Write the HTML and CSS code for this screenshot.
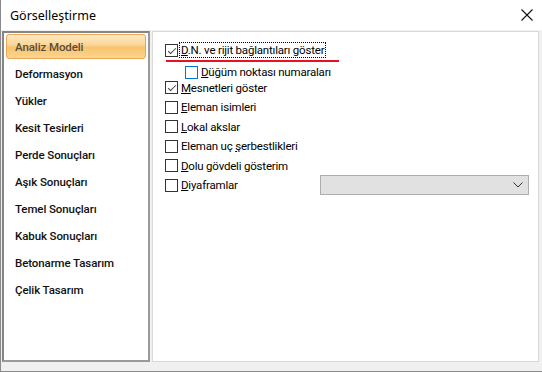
FILE: index.html
```html
<!DOCTYPE html>
<html lang="tr">
<head>
    <meta charset="UTF-8">
    <meta name="viewport" content="width=device-width,initial-scale=1">
    <title>Görselleştirme</title>
    <link rel="stylesheet" href="styles.css">
</head>
<body>
    <div class="window">
        <div class="titlebar">
            <span class="title">Görselleştirme</span>
            <svg class="close" width="12" height="12" viewBox="0 0 12 12">
                <path d="M0.5 0.5 L11.5 11.5 M11.5 0.5 L0.5 11.5" stroke="#111" stroke-width="1.1" fill="none"/>
            </svg>
        </div>
        <div class="content">
            <ul class="nav">
                <li class="active">Analiz Modeli</li>
                <li>Deformasyon</li>
                <li>Yükler</li>
                <li>Kesit Tesirleri</li>
                <li>Perde Sonuçları</li>
                <li>Aşık Sonuçları</li>
                <li>Temel Sonuçları</li>
                <li>Kabuk Sonuçları</li>
                <li>Betonarme Tasarım</li>
                <li>Çelik Tasarım</li>
            </ul>
            <div class="panel">
                <div class="row first">
                    <span class="box checked"></span>
                    <span class="label focus"><u>D</u>.N. ve rijit bağlantıları göster</span>
                </div>
                <div class="redline"></div>
                <div class="row sub">
                    <span class="box hover"></span>
                    <span class="label"><u>D</u>üğüm noktası numaraları</span>
                </div>
                <div class="row">
                    <span class="box checked"></span>
                    <span class="label"><u>M</u>esnetleri göster</span>
                </div>
                <div class="row">
                    <span class="box"></span>
                    <span class="label"><u>E</u>leman isimleri</span>
                </div>
                <div class="row">
                    <span class="box"></span>
                    <span class="label"><u>L</u>okal akslar</span>
                </div>
                <div class="row">
                    <span class="box"></span>
                    <span class="label">Eleman uç <u>ş</u>erbestlikleri</span>
                </div>
                <div class="row">
                    <span class="box"></span>
                    <span class="label"><u>D</u>olu gövdeli gösterim</span>
                </div>
                <div class="row">
                    <span class="box"></span>
                    <span class="label"><u>D</u>iyaframlar</span>
                    <div class="select">
                        <svg width="10" height="6" viewBox="0 0 10 6">
                            <path d="M0.5 0.5 L5 5 L9.5 0.5" stroke="#333" stroke-width="1" fill="none"/>
                        </svg>
                    </div>
                </div>
            </div>
        </div>
    </div>
</body>
</html>
```

FILE: styles.css
```css
body {
    margin: 0;
    padding: 0;
    font-family: Roboto, "Noto Sans", sans-serif;
    font-size: 11.5px;
    letter-spacing: -0.2px;
    color: #000;
    background: #f0f0f0;
}
.window {
    width: 542px;
    height: 372px;
    box-sizing: border-box;
    border-left: 1px solid #8a8a8a;
    border-bottom: 1px solid #8a8a8a;
    background: #f0f0f0;
    display: flex;
    flex-direction: column;
}
.titlebar {
    height: 30px;
    background: #fff;
    display: flex;
    align-items: center;
    padding: 0 8px 0 9px;
    flex-shrink: 0;
}
.title {
    flex: 1;
    font-family: "Noto Sans", sans-serif;
    font-size: 12.5px;
    letter-spacing: 0;
}
.close {
    margin-right: 1px;
}
.content {
    flex: 1;
    display: flex;
    padding: 1px 3px 9px 1px;
    gap: 2px;
}
.nav {
    width: 140px;
    margin: 0;
    padding: 1px 2px;
    list-style: none;
    background: #fff;
    border: 2px solid #858585;
    border-right-color: #9a9a9a;
    border-bottom-color: #9a9a9a;
}
.nav li {
    height: 25px;
    box-sizing: border-box;
    margin-bottom: 2px;
    padding-left: 8px;
    display: flex;
    align-items: center;
    font-weight: 500;
    font-size: 11.5px;
    letter-spacing: -0.1px;
    color: #111;
    border: 1px solid transparent;
}
.nav li.active {
    border-color: #e9a654;
    border-radius: 3px;
    color: #5c4c3c;
    background: linear-gradient(#fde8c2 0%, #fbd89c 40%, #f8c46c 55%, #fbd592 100%);
}
.panel {
    flex: 1;
    background: #fff;
    border: 1px solid #d9d9d9;
    padding: 10px 9px 0 12px;
}
.row {
    display: flex;
    align-items: center;
    height: 19.5px;
}
.row.first {
    height: 16px;
    margin-bottom: 2px;
}
.row.sub {
    padding-left: 20px;
    height: 18px;
    margin-top: 1px;
    margin-bottom: -3px;
}
.redline {
    height: 2px;
    width: 173px;
    margin-left: 1px;
    background: #e81123;
}
.box {
    width: 11px;
    height: 11px;
    border: 1px solid #333;
    background: #fff;
    flex-shrink: 0;
    position: relative;
}
.box.hover {
    border-color: #0078d7;
}
.box.checked::after {
    content: "";
    position: absolute;
    left: 2px;
    top: 0;
    width: 7px;
    height: 3px;
    border-left: 1px solid #444;
    border-bottom: 1px solid #444;
    transform: translate(0, 3px) rotate(-45deg);
}
.label {
    margin-left: 2px;
    padding: 0 1px;
    white-space: nowrap;
}
.label.focus {
    outline: 1px dotted #000;
}
.select {
    margin-left: auto;
    width: 202px;
    height: 18px;
    border: 1px solid #adadad;
    background: #e1e1e1;
    display: flex;
    align-items: center;
    justify-content: flex-end;
    padding-right: 5px;
    box-sizing: content-box;
}
```
